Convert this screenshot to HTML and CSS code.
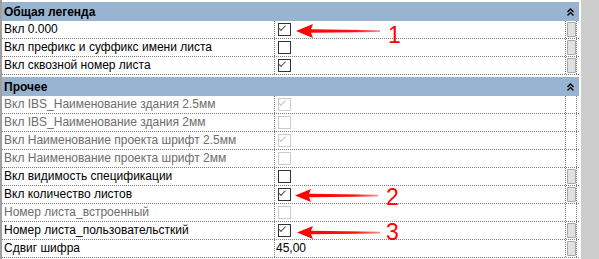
FILE: index.html
```html
<!DOCTYPE html>
<html lang="ru">
<head>
  <meta charset="UTF-8">
  <title>Свойства</title>
  <link rel="stylesheet" href="styles.css">
</head>
<body>
  <div class="panel">
    <div class="grid">
      <div class="section-head">
        <span>Общая легенда</span>
        <svg class="collapse" viewBox="0 0 7 8"><path d="M0.5 4 L3.5 1 L6.5 4 M0.5 7.5 L3.5 4.5 L6.5 7.5"/></svg>
      </div>
      <div class="row">
        <div class="label">Вкл 0.000</div>
        <div class="value"><span class="check on"></span></div>
        <div class="btn-cell"><span class="btn"></span></div>
      </div>
      <div class="row">
        <div class="label">Вкл префикс и суффикс имени листа</div>
        <div class="value"><span class="check"></span></div>
        <div class="btn-cell"><span class="btn"></span></div>
      </div>
      <div class="row">
        <div class="label">Вкл сквозной номер листа</div>
        <div class="value"><span class="check on"></span></div>
        <div class="btn-cell"><span class="btn"></span></div>
      </div>

      <div class="section-head">
        <span>Прочее</span>
        <svg class="collapse" viewBox="0 0 7 8"><path d="M0.5 4 L3.5 1 L6.5 4 M0.5 7.5 L3.5 4.5 L6.5 7.5"/></svg>
      </div>
      <div class="row disabled">
        <div class="label">Вкл IBS_Наименование здания 2.5мм</div>
        <div class="value"><span class="check on"></span></div>
        <div class="btn-cell"></div>
      </div>
      <div class="row disabled">
        <div class="label">Вкл IBS_Наименование здания 2мм</div>
        <div class="value"><span class="check"></span></div>
        <div class="btn-cell"></div>
      </div>
      <div class="row disabled">
        <div class="label">Вкл Наименование проекта шрифт 2.5мм</div>
        <div class="value"><span class="check on"></span></div>
        <div class="btn-cell"></div>
      </div>
      <div class="row disabled">
        <div class="label">Вкл Наименование проекта шрифт 2мм</div>
        <div class="value"><span class="check"></span></div>
        <div class="btn-cell"></div>
      </div>
      <div class="row">
        <div class="label">Вкл видимость спецификации</div>
        <div class="value"><span class="check"></span></div>
        <div class="btn-cell"><span class="btn"></span></div>
      </div>
      <div class="row">
        <div class="label">Вкл количество листов</div>
        <div class="value"><span class="check on"></span></div>
        <div class="btn-cell"><span class="btn"></span></div>
      </div>
      <div class="row disabled">
        <div class="label">Номер листа_встроенный</div>
        <div class="value"><span class="check"></span></div>
        <div class="btn-cell"></div>
      </div>
      <div class="row">
        <div class="label">Номер листа_пользовательсткий</div>
        <div class="value"><span class="check on"></span></div>
        <div class="btn-cell"><span class="btn"></span></div>
      </div>
      <div class="row">
        <div class="label">Сдвиг шифра</div>
        <div class="value text">45,00</div>
        <div class="btn-cell"><span class="btn"></span></div>
      </div>
    </div>
    <div class="scrollbar"></div>
  </div>

  <!-- annotations drawn over the screenshot -->
  <svg class="marks" width="599" height="259" viewBox="0 0 599 259">
    <defs>
      <linearGradient id="fade" x1="0" x2="1" y1="0" y2="0">
        <stop offset="0" stop-color="#ff0000"/>
        <stop offset="0.7" stop-color="#ff1010"/>
        <stop offset="1" stop-color="#ff9090"/>
      </linearGradient>
    </defs>
    <path d="M296 31 L313 24 L311 29.3 L380 30.2 L380 32 L311 32.8 L313 38 Z" fill="url(#fade)"/>
    <path d="M295 195.5 L311 189 L309 193.8 L378 194.7 L378 196.5 L309 197.3 L311 202 Z" fill="url(#fade)"/>
    <path d="M297 232.5 L313 226 L311 230.8 L380 231.7 L380 233.5 L311 234.3 L313 239 Z" fill="url(#fade)"/>
    <text x="388" y="43" class="num">1</text>
    <text x="386" y="205" class="num">2</text>
    <text x="386" y="240" class="num">3</text>
  </svg>
</body>
</html>
```

FILE: styles.css
```css
body {
  margin: 0;
  background: #fff;
  font-family: 'Liberation Sans', Arial, sans-serif;
  font-size: 12px;
  color: #000;
  position: relative;
  width: 599px;
  height: 259px;
  overflow: hidden;
}

.panel {
  display: flex;
  height: 259px;
}
.grid {
  width: 577px;
  border-left: 2px solid #a0a0a0;
}
.scrollbar {
  width: 18px;
  margin-left: 2px;
  background: #cdcdcd;
}

.section-head {
  margin-top: 2px;
  height: 19px;
  background: #99b4d1;
  font-weight: bold;
  display: flex;
  align-items: center;
  justify-content: space-between;
  padding: 0 5px 0 2px;
}
.section-head:first-child {
  margin-top: 2px;
}
.collapse {
  width: 7px;
  height: 8px;
  fill: none;
  stroke: #000;
  stroke-width: 1.4;
}

.row {
  display: grid;
  grid-template-columns: 273px 291px 11px;
  height: 17px;
  border-bottom: 1px dotted #7a7a7a;
}
.label {
  padding-left: 2px;
  line-height: 17px;
  white-space: nowrap;
  border-right: 1px dotted #7a7a7a;
}
.value {
  display: flex;
  align-items: center;
  padding-left: 3px;
  border-right: 1px dotted #7a7a7a;
}
.value.text {
  padding-left: 1px;
  line-height: 17px;
}
.btn-cell {
  border-right: 1px dotted #7a7a7a;
  display: flex;
  justify-content: center;
  align-items: center;
}
.btn {
  width: 7px;
  height: 13px;
  background: #e1e1e1;
  border: 1px solid #a8a8a8;
  border-radius: 1px;
}

.check {
  position: relative;
  width: 11px;
  height: 11px;
  border: 1px solid #333;
  background: #fff;
}
.check.on::after {
  content: "";
  position: absolute;
  left: 2px;
  top: 1px;
  width: 6px;
  height: 3px;
  border-left: 1px solid #555;
  border-bottom: 1px solid #555;
  transform: translate(0, 2px) rotate(-45deg);
  transform-origin: left bottom;
}

.disabled .label {
  color: #6d6d6d;
}
.disabled .check {
  border-color: #cccccc;
}
.disabled .check.on::after {
  border-color: #c4c4c4;
}

.marks {
  position: absolute;
  left: 0;
  top: 0;
  pointer-events: none;
}
.num {
  font-family: 'Liberation Sans', Arial, sans-serif;
  font-size: 23px;
  fill: #ff0000;
}
```
